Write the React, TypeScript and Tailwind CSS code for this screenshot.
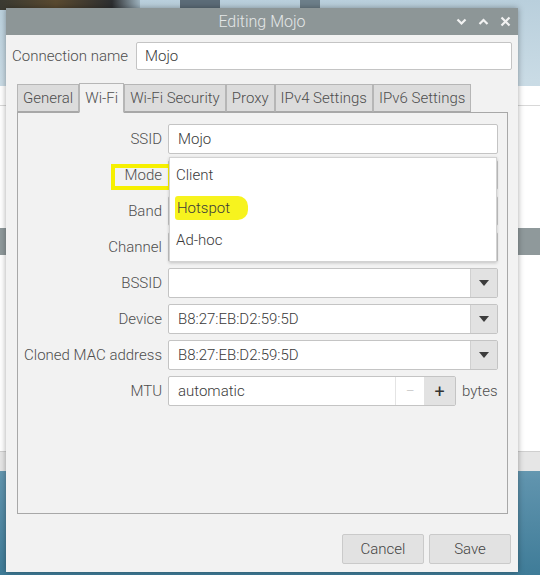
import React from "react";

const font = { fontFamily: "Roboto, 'Liberation Sans', sans-serif" };

function Arrow() {
  return (
    <svg width="10" height="6" viewBox="0 0 10 6">
      <path d="M0 0 L10 0 L5 6 Z" fill="#3c3c3c" />
    </svg>
  );
}

function Combo({ value }: { value?: string }) {
  return (
    <div className="flex h-[30px] border border-[#c4c4c4] rounded-[2px] bg-white">
      <div className="flex-1 flex items-center pl-[9px] text-[15px] text-[#3a3a3a] whitespace-nowrap">{value}</div>
      <div className="w-[27px] flex items-center justify-center bg-[#e2e2e2] border-l border-[#d0d0d0]">
        <Arrow />
      </div>
    </div>
  );
}

function Label({ children }: { children: React.ReactNode }) {
  return (
    <div className="h-[30px] flex items-center justify-end text-[15px] text-[#4e4e4e] whitespace-nowrap">{children}</div>
  );
}

export default function App() {
  return (
    <div
      className="relative w-[540px] h-[575px] overflow-hidden font-light bg-[linear-gradient(180deg,#b9cfdc_0px,#c9dbe5_80px,#d7e3ea_300px,#5f93ad_480px,#3f7c98_575px)]"
      style={font}
    >
      {/* dark wallpaper bits at top left */}
      <div className="absolute left-0 top-0 w-[140px] h-[10px] bg-[linear-gradient(90deg,#3a3a32,#5a4a30_40%,#2c2e30_80%,#9fb4c0)]" />
      <div className="absolute left-[180px] top-0 w-[40px] h-[8px] bg-[#5c6c78]" />
      <div className="absolute left-[300px] top-0 w-[20px] h-[8px] bg-[#6d7f8a]" />

      {/* background window */}
      <div className="absolute left-0 right-0 top-[86px] h-[385px] bg-white">
        <div className="h-[20px] border-b border-[#d8d8d8]" />
        <div className="absolute left-0 right-0 top-[142px] h-[27px] bg-[#8f999b]" />
        <div className="absolute left-0 right-0 bottom-0 h-[20px] bg-[#e6e6e6] border-t border-[#cfcfcf]" />
      </div>

      {/* dialog */}
      <div className="absolute left-[6px] top-[8px] w-[512px] h-[564px] bg-[#f2f2f2] flex flex-col shadow-[0_0_6px_rgba(0,0,0,0.35)]">
        {/* title bar */}
        <div className="relative h-[27px] shrink-0 bg-[#8d9697] flex items-center justify-center">
          <span className="text-[16px] text-[#e4e7e7]">Editing Mojo</span>
          <div className="absolute right-[7px] top-0 h-full flex items-center gap-[11px]">
            <svg width="11" height="8" viewBox="0 0 11 8">
              <path d="M1.5 1.5 L5.5 5.5 L9.5 1.5" stroke="#f2f2f2" strokeWidth="2.2" fill="none" />
            </svg>
            <svg width="11" height="8" viewBox="0 0 11 8">
              <path d="M1.5 6 L5.5 2 L9.5 6" stroke="#f2f2f2" strokeWidth="2.2" fill="none" />
            </svg>
            <svg width="11" height="11" viewBox="0 0 11 11">
              <path d="M1.5 1.5 L9.5 9.5 M9.5 1.5 L1.5 9.5" stroke="#f2f2f2" strokeWidth="2.2" fill="none" />
            </svg>
          </div>
        </div>

        {/* connection name */}
        <div className="flex items-center mt-[7px] pl-[6px] pr-[6px]">
          <span className="text-[15px] text-[#4e4e4e] w-[124px] shrink-0 whitespace-nowrap">Connection name</span>
          <div className="flex-1 h-[28px] bg-white border border-[#c4c4c4] rounded-[2px] flex items-center pl-[8px] text-[15px] text-[#3a3a3a]">
            Mojo
          </div>
        </div>

        {/* tabs */}
        <div className="flex mt-[12px] ml-[11px] h-[30px] items-end relative z-10 shrink-0">
          <div className="h-[28px] px-[5px] flex items-center bg-[#dcdcdc] border border-[#b6b6b6] border-b-[#a8a8a8] text-[15px] text-[#4e4e4e]">General</div>
          <div className="h-[30px] px-[5px] flex items-center bg-[#f2f2f2] border border-[#b6b6b6] border-b-transparent text-[15px] text-[#4e4e4e] -mb-[1px]">Wi-Fi</div>
          <div className="h-[28px] px-[5px] flex items-center bg-[#dcdcdc] border border-[#b6b6b6] border-b-[#a8a8a8] text-[15px] text-[#4e4e4e]">Wi-Fi Security</div>
          <div className="h-[28px] px-[5px] flex items-center bg-[#dcdcdc] border border-[#b6b6b6] border-b-[#a8a8a8] text-[15px] text-[#4e4e4e]">Proxy</div>
          <div className="h-[28px] px-[5px] flex items-center bg-[#dcdcdc] border border-[#b6b6b6] border-b-[#a8a8a8] text-[15px] text-[#4e4e4e]">IPv4 Settings</div>
          <div className="h-[28px] px-[5px] flex items-center bg-[#dcdcdc] border border-[#b6b6b6] border-b-[#a8a8a8] text-[15px] text-[#4e4e4e]">IPv6 Settings</div>
        </div>

        {/* panel */}
        <div className="relative ml-[11px] mr-[10px] h-[402px] shrink-0 border border-[#a8a8a8] bg-[#f2f2f2]">
          <div className="grid grid-cols-[133px_1fr] gap-x-[6px] gap-y-[6px] pt-[11px] pl-[11px] pr-[11px]">
            <Label>SSID</Label>
            <div className="h-[30px] bg-white border border-[#c4c4c4] rounded-[2px] flex items-center pl-[9px] text-[15px] text-[#3a3a3a]">Mojo</div>
            <Label>Mode</Label>
            <Combo />
            <Label>Band</Label>
            <Combo />
            <Label>Channel</Label>
            <Combo />
            <Label>BSSID</Label>
            <Combo />
            <Label>Device</Label>
            <Combo value="B8:27:EB:D2:59:5D" />
            <Label>Cloned MAC address</Label>
            <Combo value="B8:27:EB:D2:59:5D" />
            <Label>MTU</Label>
            <div className="flex items-center gap-[6px]">
              <div className="flex h-[30px] w-[288px] bg-white border border-[#c4c4c4] rounded-[2px]">
                <div className="flex-1 flex items-center pl-[9px] text-[15px] text-[#3a3a3a]">automatic</div>
                <div className="w-[29px] flex items-center justify-center border-l border-[#e4e4e4] text-[16px] text-[#c8c8c8]">−</div>
                <div className="w-[31px] flex items-center justify-center bg-[#e2e2e2] text-[18px] text-[#333] font-normal">+</div>
              </div>
              <span className="text-[15px] text-[#4e4e4e]">bytes</span>
            </div>
          </div>

          {/* Mode annotation box */}
          <div className="absolute left-[93px] top-[51px] w-[61px] h-[26px] border-[4px] border-[#f6f000]" />

          {/* dropdown popup */}
          <div className="absolute left-[151px] top-[44px] w-[328px] h-[105px] bg-white border border-[#d2d2d2] shadow-[0_1px_3px_rgba(0,0,0,0.2)] flex flex-col pt-[1px]">
            <div className="h-[33px] flex items-center pl-[6px] text-[15px] text-[#3a3a3a]">Client</div>
            <div className="h-[32px] flex items-center pl-[5px] text-[15px] text-[#3a3a3a]">
              <span className="bg-[#f7f31e] pl-[2px] pr-[18px] py-[1px] rounded-r-[10px] rounded-l-[3px]">Hotspot</span>
            </div>
            <div className="h-[32px] flex items-center pl-[6px] text-[15px] text-[#3a3a3a]">Ad-hoc</div>
          </div>
        </div>

        {/* buttons */}
        <div className="flex justify-end gap-[5px] mt-[20px] pr-[7px]">
          <div className="w-[82px] h-[30px] flex items-center justify-center bg-[#e2e2e2] border border-[#cacaca] rounded-[2px] text-[15px] text-[#444]">Cancel</div>
          <div className="w-[82px] h-[30px] flex items-center justify-center bg-[#e2e2e2] border border-[#cacaca] rounded-[2px] text-[15px] text-[#444]">Save</div>
        </div>
      </div>
    </div>
  );
}
